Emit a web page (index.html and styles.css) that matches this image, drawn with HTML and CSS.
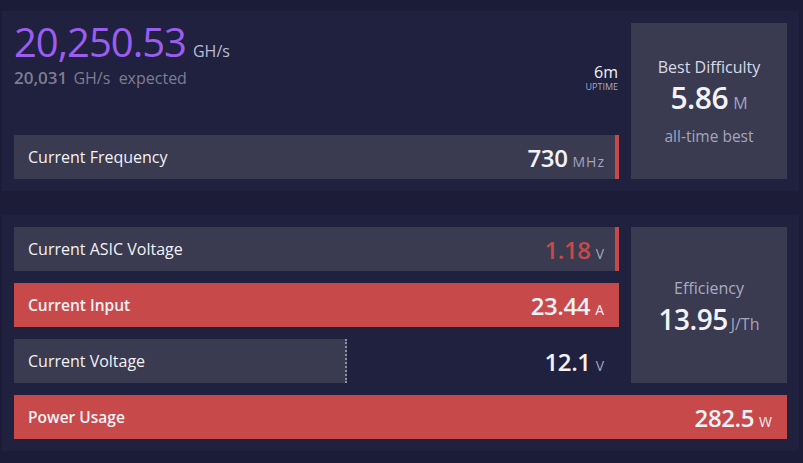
FILE: index.html
```html
<!DOCTYPE html>
<html lang="en">
<head>
    <meta charset="UTF-8">
    <meta name="viewport" content="width=device-width, initial-scale=1.0">
    <title>Miner Stats</title>
    <link rel="stylesheet" href="styles.css">
</head>
<body>
    <div class="panel">
        <div class="main-col">
            <div class="hash-head">
                <div class="hashrate">
                    <div class="hash-now"><span class="big">20,250.53</span><span class="unit">GH/s</span></div>
                    <div class="hash-exp"><b>20,031</b> GH/s&nbsp; expected</div>
                </div>
                <div class="uptime">
                    <div class="uptime-val">6m</div>
                    <div class="uptime-lbl">UPTIME</div>
                </div>
            </div>
            <div class="bar edge">
                <span class="bar-label">Current Frequency</span>
                <span class="bar-value">730<small>MHz</small></span>
            </div>
        </div>
        <div class="card">
            <div class="card-title">Best Difficulty</div>
            <div class="card-value">5.86<small>M</small></div>
            <div class="card-sub">all-time best</div>
        </div>
    </div>

    <div class="panel power">
        <div class="main-col">
            <div class="bar edge">
                <span class="bar-label">Current ASIC Voltage</span>
                <span class="bar-value warn">1.18<small>V</small></span>
            </div>
            <div class="bar alert">
                <span class="bar-label">Current Input</span>
                <span class="bar-value">23.44<small>A</small></span>
            </div>
            <div class="bar plain">
                <div class="fill dotted" style="width: 331px"></div>
                <span class="bar-label">Current Voltage</span>
                <span class="bar-value">12.1<small>V</small></span>
            </div>
        </div>
        <div class="card efficiency">
            <div class="card-title">Efficiency</div>
            <div class="card-value">13.95<small>J/Th</small></div>
        </div>
        <div class="bar alert wide">
            <span class="bar-label">Power Usage</span>
            <span class="bar-value">282.5<small>W</small></span>
        </div>
    </div>
</body>
</html>
```

FILE: styles.css
```css
html {
    background: #1c1c39;
}

body {
    margin: 0;
    padding: 11px 4px 0 2px;
    font-family: 'Open Sans', 'Noto Sans', sans-serif;
    color: #f2f2f7;
}

.panel {
    display: flex;
    gap: 12px;
    padding: 12px;
    background: #20203f;
    margin-bottom: 24px;
}

.panel:last-child {
    margin-bottom: 0;
}

.panel.power {
    flex-wrap: wrap;
}

.main-col {
    flex: 1;
    display: flex;
    flex-direction: column;
    gap: 12px;
}

.hash-head {
    height: 100px;
    display: flex;
    justify-content: space-between;
}

.hash-now {
    display: flex;
    align-items: baseline;
    line-height: 42px;
    margin-top: -2px;
}

.big {
    font-size: 40px;
    color: #9b5df0;
    letter-spacing: -1px;
}

.unit {
    font-size: 16px;
    line-height: 16px;
    color: #b8bcd4;
    margin-left: 7px;
}

.hash-exp {
    font-size: 16px;
    color: #7d7e8f;
    line-height: 20px;
    margin-top: 5px;
}

.hash-exp b {
    font-size: 17px;
    font-weight: 600;
    margin-right: 2px;
}

.uptime {
    align-self: flex-end;
    margin-bottom: 30px;
    margin-right: 1px;
    text-align: right;
}

.uptime-val {
    font-size: 16px;
    line-height: 17px;
}

.uptime-lbl {
    font-size: 9px;
    line-height: 12px;
    color: #a6a9c6;
}

.bar {
    position: relative;
    height: 44px;
    display: flex;
    align-items: center;
    justify-content: space-between;
    padding: 0 14px;
    background: #3a3a50;
    box-sizing: border-box;
}

.bar.edge {
    padding-right: 10px;
    border-right: 4px solid #c8494a;
}

.bar.alert {
    background: #c8494a;
}

.bar.alert .bar-label {
    font-size: 15.5px;
    font-weight: 600;
}

.bar.plain {
    background: transparent;
}

.bar.wide {
    flex-basis: 100%;
}

.fill {
    position: absolute;
    top: 0;
    bottom: 0;
    left: 0;
    background: #3a3a50;
}

.fill.dotted {
    border-right: 2px dotted #8e8fa8;
}

.bar-label {
    position: relative;
    font-size: 16px;
}

.bar-value {
    position: relative;
    font-size: 24px;
    font-weight: 600;
    letter-spacing: -0.4px;
}

.bar-value small {
    font-size: 14px;
    font-weight: 400;
    color: #a3a5be;
    margin-left: 5px;
    letter-spacing: 1px;
}

.bar.alert .bar-value small {
    color: #f2f2f7;
}

.bar-value.warn {
    color: #c8494a;
}

.card {
    width: 156px;
    background: #3a3a50;
    display: flex;
    flex-direction: column;
    align-items: center;
    justify-content: center;
}

.card.efficiency {
    padding-top: 10px;
    box-sizing: border-box;
}

.card-title {
    font-size: 16px;
    color: #d8dae6;
}

.power .card-title {
    color: #a9abc0;
}

.card-value {
    font-size: 30px;
    font-weight: 600;
    line-height: 40px;
    letter-spacing: -0.5px;
}

.efficiency .card-value {
    font-size: 28px;
}

.card-value small {
    font-size: 16px;
    font-weight: 400;
    color: #a3a5be;
    margin-left: 5px;
    letter-spacing: 0;
}

.efficiency .card-value small {
    margin-left: 3px;
}

.card-sub {
    font-size: 15.5px;
    color: #a3a5be;
    margin-top: 2px;
}
```
